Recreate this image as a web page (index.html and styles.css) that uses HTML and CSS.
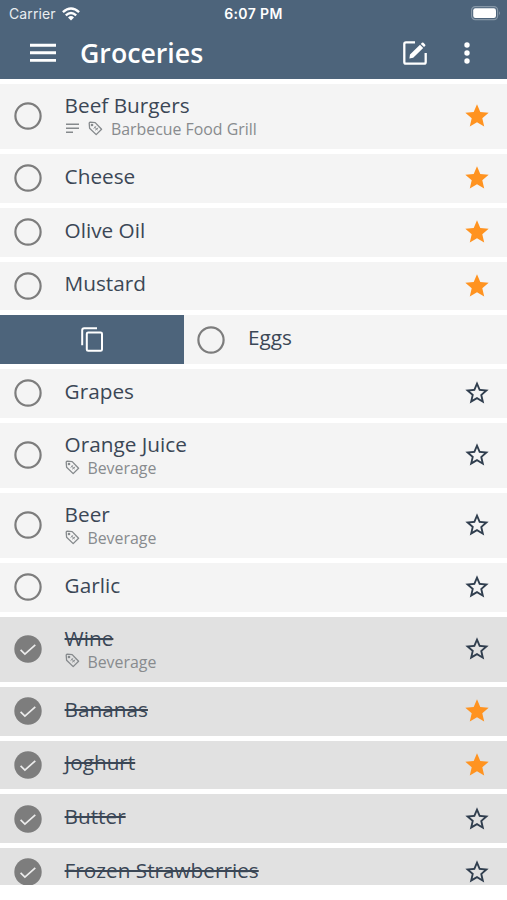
FILE: index.html
```html
<!DOCTYPE html>
<html lang="en">
<head>
<meta charset="utf-8">
<meta name="viewport" content="width=device-width, initial-scale=1">
<title>Groceries</title>
<link rel="stylesheet" href="styles.css">
</head>
<body>
<svg class="defs" width="0" height="0" aria-hidden="true">
  <symbol id="star" viewBox="0 0 24 24"><path d="M12 17.27 18.18 21l-1.64-7.03L22 9.24l-7.19-.61L12 2 9.19 8.63 2 9.24l5.46 4.73L5.82 21z"/></symbol>
  <symbol id="star-outline" viewBox="0 0 24 24"><path d="M22 9.24l-7.19-.62L12 2 9.19 8.63 2 9.24l5.46 4.73L5.82 21 12 17.27 18.18 21l-1.63-7.03L22 9.24zM12 15.4l-3.76 2.27 1-4.28-3.32-2.88 4.38-.38L12 6.1l1.71 4.04 4.38.38-3.32 2.88 1 4.28L12 15.4z"/></symbol>
  <symbol id="open" viewBox="0 0 28 28"><circle cx="14" cy="14" r="12.6" fill="none" stroke="#7d7d7d" stroke-width="2.2"/></symbol>
  <symbol id="done" viewBox="0 0 28 28"><circle cx="14" cy="14" r="13.7" fill="#7d7d7d"/><path d="M6.6 14.8l4.3 4.3L21.3 9.8" fill="none" stroke="#ececec" stroke-width="1.7"/></symbol>
  <symbol id="tag" viewBox="0 0 15 15"><g fill="none" stroke="#85898c" stroke-width="1.3" stroke-linejoin="round"><path d="M1.2 2.2 1.6 7.2 8.2 13.6 13.6 8.2 7.2 1.6 2.2 1.2Q1.2 1.2 1.2 2.2z"/><circle cx="4" cy="4" r=".7"/><path d="M5.6 7.5 8.2 5.3M7.2 9.2l3-2.4M6.5 6l3.1 3" stroke-width="1"/></g></symbol>
</svg>
<div class="app">
  <header class="header">
    <div class="status">
      <div class="carrier"><span>Carrier</span>
        <svg width="18" height="14" viewBox="0 0 18 14"><g fill="none" stroke="#fff" stroke-width="2.4"><path d="M.9 5.2Q9-2.3 17.1 5.2"/><path d="M3.8 8.3Q9 3.7 14.2 8.3"/></g><path d="M6 10.4Q9 7.8 12 10.4L9 13.5z" fill="#fff"/></svg>
      </div>
      <div class="time">6:07 PM</div>
      <svg class="battery" width="30" height="15" viewBox="0 0 30 15"><rect x=".6" y=".6" width="26" height="13" rx="3.6" fill="none" stroke="#8697a7" stroke-width="1.2"/><rect x="2.2" y="2.2" width="22.8" height="9.8" rx="2.2" fill="#fff"/><path d="M28.1 5q1.7 2.3 0 4.6z" fill="#a5b2bf"/></svg>
    </div>
    <div class="toolbar">
      <svg class="menu" width="26" height="20" viewBox="0 0 26 20"><path d="M0 2.2h26M0 9.8h26M0 17.4h26" stroke="#fff" stroke-width="2.9"/></svg>
      <h1>Groceries</h1>
      <svg class="edit" width="26" height="26" viewBox="0 0 26 26"><path d="M13 2.3H4Q2.3 2.3 2.3 4v18q0 1.7 1.7 1.7h18q1.7 0 1.7-1.7v-9" fill="none" stroke="#fff" stroke-width="2.3"/><path d="M8 14.5 18 4.7l3.2 3.2-10 9.8L7.4 18.4zM18.8 3.9l1.1-1.1q.8-.7 1.6 0l1.6 1.6q.8.8 0 1.6L22 7.1z" fill="#fff"/></svg>
      <svg class="more" width="8" height="24" viewBox="0 0 8 24"><g fill="#fff"><circle cx="4" cy="4" r="2.7"/><circle cx="4" cy="12" r="2.7"/><circle cx="4" cy="20" r="2.7"/></g></svg>
    </div>
  </header>
  <main class="list">
    <div class="row tall"><svg class="check"><use href="#open"/></svg><div class="text"><div class="name">Beef Burgers</div><div class="meta"><svg class="note" width="13" height="11" viewBox="0 0 13 11"><path d="M0 1.3h13M0 5.3h13M0 9.2h7" stroke="#85898c" stroke-width="1.4"/></svg><svg class="tag"><use href="#tag"/></svg><span>Barbecue Food Grill</span></div></div><svg class="star on"><use href="#star"/></svg></div>
    <div class="row"><svg class="check"><use href="#open"/></svg><div class="text"><div class="name">Cheese</div></div><svg class="star on"><use href="#star"/></svg></div>
    <div class="row"><svg class="check"><use href="#open"/></svg><div class="text"><div class="name">Olive Oil</div></div><svg class="star on"><use href="#star"/></svg></div>
    <div class="row"><svg class="check"><use href="#open"/></svg><div class="text"><div class="name">Mustard</div></div><svg class="star on"><use href="#star"/></svg></div>
    <div class="swipe">
      <div class="action"><svg width="24" height="27" viewBox="0 0 24 27"><g fill="none" stroke="#fff" stroke-width="2"><path d="M2.2 19.2V4.2Q2.2 2.2 4.2 2.2H17"/><rect x="6.8" y="6.4" width="15.2" height="18.4" rx="1.4"/></g></svg></div>
      <div class="row"><svg class="check"><use href="#open"/></svg><div class="text"><div class="name">Eggs</div></div></div>
    </div>
    <div class="row"><svg class="check"><use href="#open"/></svg><div class="text"><div class="name">Grapes</div></div><svg class="star"><use href="#star-outline"/></svg></div>
    <div class="row tall"><svg class="check"><use href="#open"/></svg><div class="text"><div class="name">Orange Juice</div><div class="meta"><svg class="tag"><use href="#tag"/></svg><span>Beverage</span></div></div><svg class="star"><use href="#star-outline"/></svg></div>
    <div class="row tall"><svg class="check"><use href="#open"/></svg><div class="text"><div class="name">Beer</div><div class="meta"><svg class="tag"><use href="#tag"/></svg><span>Beverage</span></div></div><svg class="star"><use href="#star-outline"/></svg></div>
    <div class="row"><svg class="check"><use href="#open"/></svg><div class="text"><div class="name">Garlic</div></div><svg class="star"><use href="#star-outline"/></svg></div>
    <div class="row tall checked"><svg class="check"><use href="#done"/></svg><div class="text"><div class="name">Wine</div><div class="meta"><svg class="tag"><use href="#tag"/></svg><span>Beverage</span></div></div><svg class="star"><use href="#star-outline"/></svg></div>
    <div class="row checked"><svg class="check"><use href="#done"/></svg><div class="text"><div class="name">Bananas</div></div><svg class="star on"><use href="#star"/></svg></div>
    <div class="row checked"><svg class="check"><use href="#done"/></svg><div class="text"><div class="name">Joghurt</div></div><svg class="star on"><use href="#star"/></svg></div>
    <div class="row checked"><svg class="check"><use href="#done"/></svg><div class="text"><div class="name">Butter</div></div><svg class="star"><use href="#star-outline"/></svg></div>
    <div class="row checked"><svg class="check"><use href="#done"/></svg><div class="text"><div class="name">Frozen Strawberries</div></div><svg class="star"><use href="#star-outline"/></svg></div>
  </main>
</div>
</body>
</html>
```
FILE: styles.css
```css
* { box-sizing: border-box; }
body { margin: 0; background: #fff; font-family: "Open Sans", sans-serif; }
svg { display: block; flex: none; }
.defs { position: absolute; }
.app { width: 507px; height: 900px; overflow: hidden; display: flex; flex-direction: column; }
.header { height: 79px; background: #4d647b; color: #fff; flex: none; }
.status { height: 27px; display: grid; grid-template-columns: 1fr auto 1fr; align-items: center; padding: 0 6px 0 9px; font: 14px/27px Inter, sans-serif; }
.carrier { display: flex; align-items: center; gap: 6px; color: #e9edf0; letter-spacing: .1px; }
.time { font-weight: 600; font-size: 14px; letter-spacing: .4px; margin-left: -3px; }
.battery { justify-self: end; }
.toolbar { height: 52px; display: flex; align-items: center; padding: 0 36px 0 29.5px; }
.toolbar h1 { flex: 1; margin: 0 0 0 24.5px; font-size: 26.7px; line-height: 52px; font-weight: 600; }
.menu, .edit, .more { margin-top: -1px; }
.more { margin-left: 35px; }
.list { height: 806px; overflow: hidden; padding-top: 5px; display: flex; flex-direction: column; gap: 5px; }
.row { height: 48.8px; flex: none; display: flex; align-items: center; background: #f4f4f4; padding: 0 16.5px 0 13.8px; }
.row.tall { height: 65px; }
.row.checked { background: #e1e1e1; }
.check { width: 28px; height: 28px; margin-top: -.4px; }
.text { flex: 1; margin-left: 22.8px; color: #3b4756; }
.name { font-size: 20.75px; line-height: 28px; margin-top: -5px; }
.tall .name { line-height: 26px; margin-top: -1px; }
.checked .name { text-decoration: line-through; text-decoration-thickness: 2px; }
.meta { display: flex; align-items: center; height: 22px; color: #888b8e; font-size: 15.9px; line-height: 22px; }
.note { margin: 0 9.5px 0 1px; }
.tag { width: 15px; height: 15px; margin-right: 7.8px; margin-top: -1.5px; }
.tall .text { padding-bottom: .3px; }
.star { width: 28px; height: 28px; fill: #303e4e; margin-top: -.4px; }
.star.on { fill: #ff9320; }
.swipe { display: flex; flex: none; height: 48.8px; }
.swipe .row { flex: 1; padding-left: 13.2px; }
.action { width: 184px; background: #4d647b; display: flex; align-items: center; justify-content: center; }
```
